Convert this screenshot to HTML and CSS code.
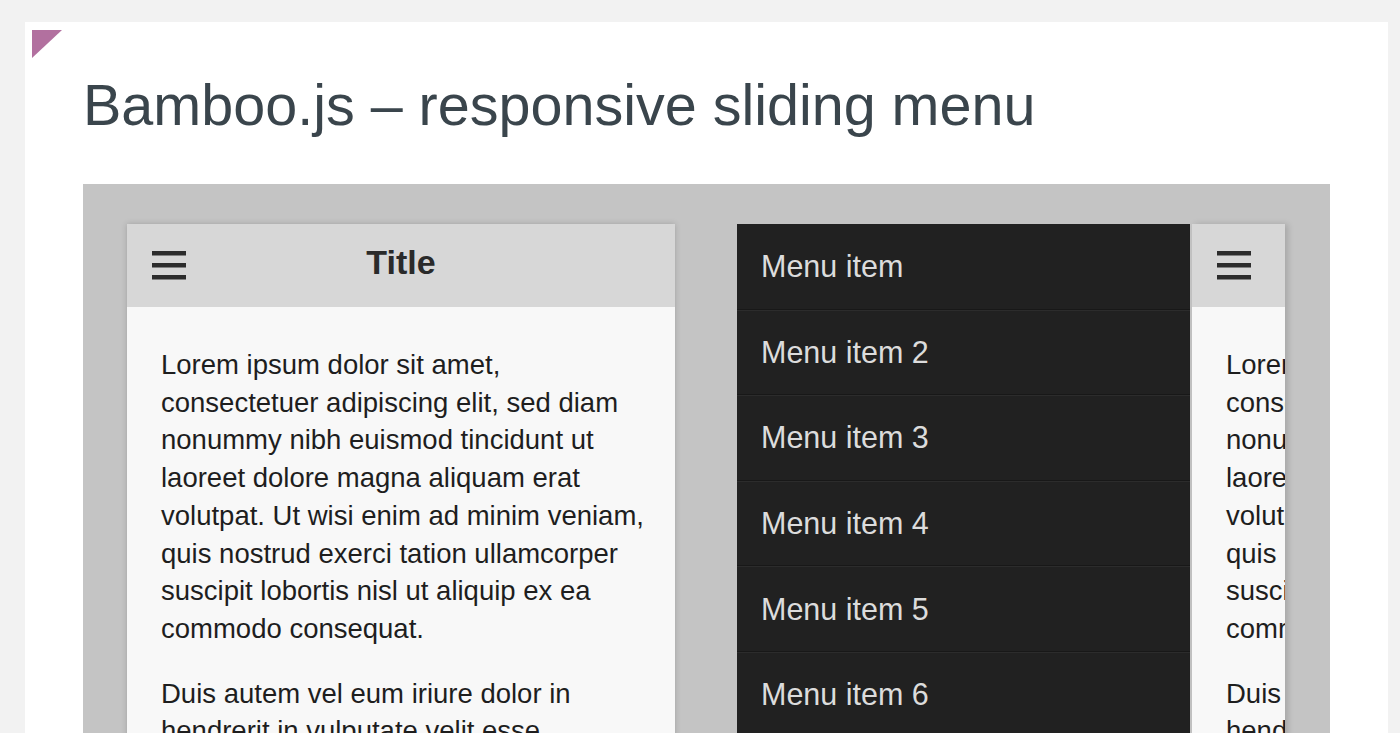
FILE: index.html
```html
<!DOCTYPE html>
<html lang="en">
<head>
<meta charset="utf-8">
<title>Bamboo.js – responsive sliding menu</title>
<link rel="stylesheet" href="styles.css">
</head>
<body>
<div class="card">
  <div class="corner"></div>
  <h1 class="title">Bamboo.js – responsive sliding menu</h1>
  <div class="demo">
    <div class="phone phone-left">
      <div class="bar">
        <svg class="burger" width="34" height="29" viewBox="0 0 34 29"><rect x="0" y="0" width="34" height="4.5" fill="#2c2c2c"/><rect x="0" y="12" width="34" height="4.5" fill="#2c2c2c"/><rect x="0" y="24" width="34" height="4.5" fill="#2c2c2c"/></svg>
        <span class="bar-title">Title</span>
        <span></span>
      </div>
      <div class="content">
        <p>Lorem ipsum dolor sit amet, consectetuer adipiscing elit, sed diam nonummy nibh euismod tincidunt ut laoreet dolore magna aliquam erat volutpat. Ut wisi enim ad minim veniam, quis nostrud exerci tation ullamcorper suscipit lobortis nisl ut aliquip ex ea commodo consequat.</p>
        <p>Duis autem vel eum iriure dolor in hendrerit in vulputate velit esse molestie consequat, vel illum dolore eu feugiat nulla facilisis at vero eros et accumsan et iusto odio dignissim.</p>
      </div>
    </div>
    <nav class="menu">
      <div class="menu-item">Menu item</div>
      <div class="menu-item">Menu item 2</div>
      <div class="menu-item">Menu item 3</div>
      <div class="menu-item">Menu item 4</div>
      <div class="menu-item">Menu item 5</div>
      <div class="menu-item">Menu item 6</div>
      <div class="menu-item">Menu item 7</div>
    </nav>
    <div class="peek">
      <div class="phone phone-inner">
        <div class="bar">
          <svg class="burger" width="34" height="29" viewBox="0 0 34 29"><rect x="0" y="0" width="34" height="4.5" fill="#2c2c2c"/><rect x="0" y="12" width="34" height="4.5" fill="#2c2c2c"/><rect x="0" y="24" width="34" height="4.5" fill="#2c2c2c"/></svg>
          <span class="bar-title">Title</span>
          <span></span>
        </div>
        <div class="content">
          <p>Lorem ipsum dolor sit amet, consectetuer adipiscing elit, sed diam nonummy nibh euismod tincidunt ut laoreet dolore magna aliquam erat volutpat. Ut wisi enim ad minim veniam, quis nostrud exerci tation ullamcorper suscipit lobortis nisl ut aliquip ex ea commodo consequat.</p>
          <p>Duis autem vel eum iriure dolor in hendrerit in vulputate velit esse molestie consequat, vel illum dolore eu feugiat nulla facilisis at vero eros et accumsan et iusto odio dignissim.</p>
        </div>
      </div>
    </div>
  </div>
</div>
</body>
</html>
```
FILE: styles.css
```css
html, body {
  margin: 0;
  padding: 0;
  height: 100%;
  overflow: hidden;
}
body {
  background: #f2f2f2;
  font-family: "Liberation Sans", Arial, Helvetica, sans-serif;
}
.card {
  margin: 22px 12px 0 25px;
  background: #ffffff;
  height: 760px;
  display: flex;
  flex-direction: column;
}
.corner {
  width: 0;
  height: 0;
  margin: 8px 0 0 7px;
  border-top: 28px solid #b2709f;
  border-right: 30px solid transparent;
}
.title {
  margin: 17px 0 49px 58px;
  font-weight: normal;
  font-size: 57.5px;
  line-height: 60px;
  color: #3a454c;
  white-space: nowrap;
}
.demo {
  margin: 0 58px 0 58px;
  background: #c4c4c4;
  padding: 40px 0 0 44px;
  display: flex;
  align-items: flex-start;
  overflow: hidden;
  height: 600px;
}
.phone {
  background: #f8f8f8;
  box-shadow: 0 0 6px rgba(0, 0, 0, 0.18);
}
.phone-left {
  width: 548px;
  flex: none;
  height: 700px;
}
.bar {
  height: 83px;
  background: #d7d7d7;
  display: grid;
  grid-template-columns: 1fr auto 1fr;
  align-items: center;
  padding: 0 25px;
}
.burger {
  display: block;
}
.bar-title {
  font-weight: bold;
  font-size: 34px;
  color: #2a2a2a;
  padding-bottom: 6px;
}
.content {
  padding: 39px 28px 0 34px;
  color: #1e1e1e;
  font-size: 27.5px;
  line-height: 37.7px;
}
.content p {
  margin: 0 0 27px 0;
}
.menu {
  margin-left: 62px;
  width: 453px;
  flex: none;
  background: #212121;
  height: 700px;
}
.menu-item {
  box-sizing: border-box;
  height: 85.6px;
  padding-left: 24px;
  display: flex;
  align-items: center;
  font-size: 30.5px;
  color: #dcdcdc;
  border-top: 1px solid #2c2c2c;
  border-bottom: 1px solid #181818;
}
.menu-item:first-child {
  border-top-color: #212121;
}
.peek {
  margin-left: 2px;
  width: 93px;
  flex: none;
  overflow: hidden;
  height: 700px;
  box-shadow: 3px 0 6px rgba(0, 0, 0, 0.15);
}
.phone-inner {
  width: 548px;
  height: 700px;
  box-shadow: none;
}
```
